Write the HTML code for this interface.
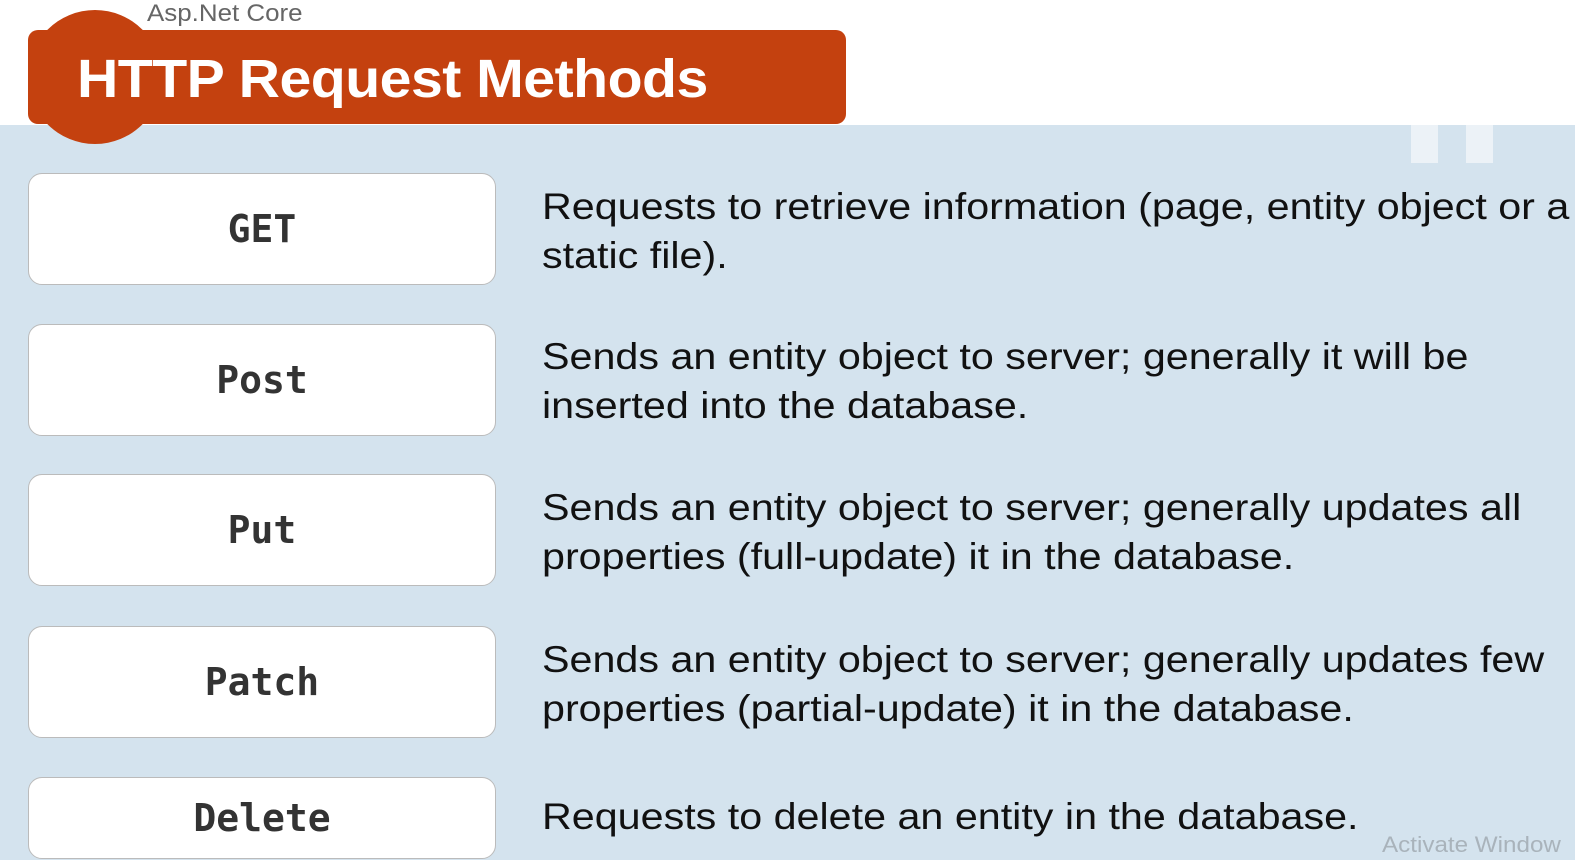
<!DOCTYPE html>
<html><head><meta charset="utf-8"><style>
body{margin:0;width:1575px;height:860px;overflow:hidden;background:#d4e3ee;position:relative;font-family:"Liberation Sans",sans-serif}
.top{position:absolute;left:0;top:0;width:1575px;height:125px;background:#fff}
.bar{position:absolute;left:28px;top:30px;width:818px;height:94px;background:#c4410f;border-radius:10px}
.circ{position:absolute;left:28px;top:10px;width:134px;height:134px;border-radius:50%;background:#c4410f}
.sub{position:absolute;left:147px;top:0px;font-size:24px;color:#666;line-height:28px;transform:scaleX(1.08);transform-origin:left}
.title{position:absolute;left:77px;top:48px;font-size:54px;font-weight:bold;color:#fff;line-height:62px;letter-spacing:-0.5px;transform:scaleX(1.06);transform-origin:left;white-space:nowrap}
.box{position:absolute;left:28px;width:466px;height:110px;background:#fff;border:1px solid #bbb;border-radius:14px;display:flex;align-items:center;justify-content:center;font-family:"DejaVu Sans Mono",monospace;font-weight:bold;font-size:38px;color:#333}
.d{position:absolute;left:542px;font-size:37px;line-height:49px;color:#111;white-space:nowrap;transform:scaleX(1.115);transform-origin:left}
.sq{position:absolute;top:125px;width:27px;height:38px;background:#ecf2f7}
.aw{position:absolute;left:1382px;top:832px;font-size:22px;color:#a9b3bb;transform:scaleX(1.1);transform-origin:left;white-space:nowrap}
</style></head><body>
<div class="top"></div>
<div class="sq" style="left:1411px"></div><div class="sq" style="left:1466px"></div>
<div class="circ"></div><div class="bar"></div>
<div class="sub">Asp.Net Core</div>
<div class="title">HTTP Request Methods</div>
<div class="box" style="top:173px">GET</div>
<div class="box" style="top:324px">Post</div>
<div class="box" style="top:474px">Put</div>
<div class="box" style="top:626px">Patch</div>
<div class="box" style="top:777px;height:80px">Delete</div>
<div class="d" style="top:182px">Requests to retrieve information (page, entity object or a<br>static file).</div>
<div class="d" style="top:332px">Sends an entity object to server; generally it will be<br>inserted into the database.</div>
<div class="d" style="top:483px">Sends an entity object to server; generally updates all<br>properties (full-update) it in the database.</div>
<div class="d" style="top:635px">Sends an entity object to server; generally updates few<br>properties (partial-update) it in the database.</div>
<div class="d" style="top:792px">Requests to delete an entity in the database.</div>
<div class="aw">Activate Window</div>
</body></html>
